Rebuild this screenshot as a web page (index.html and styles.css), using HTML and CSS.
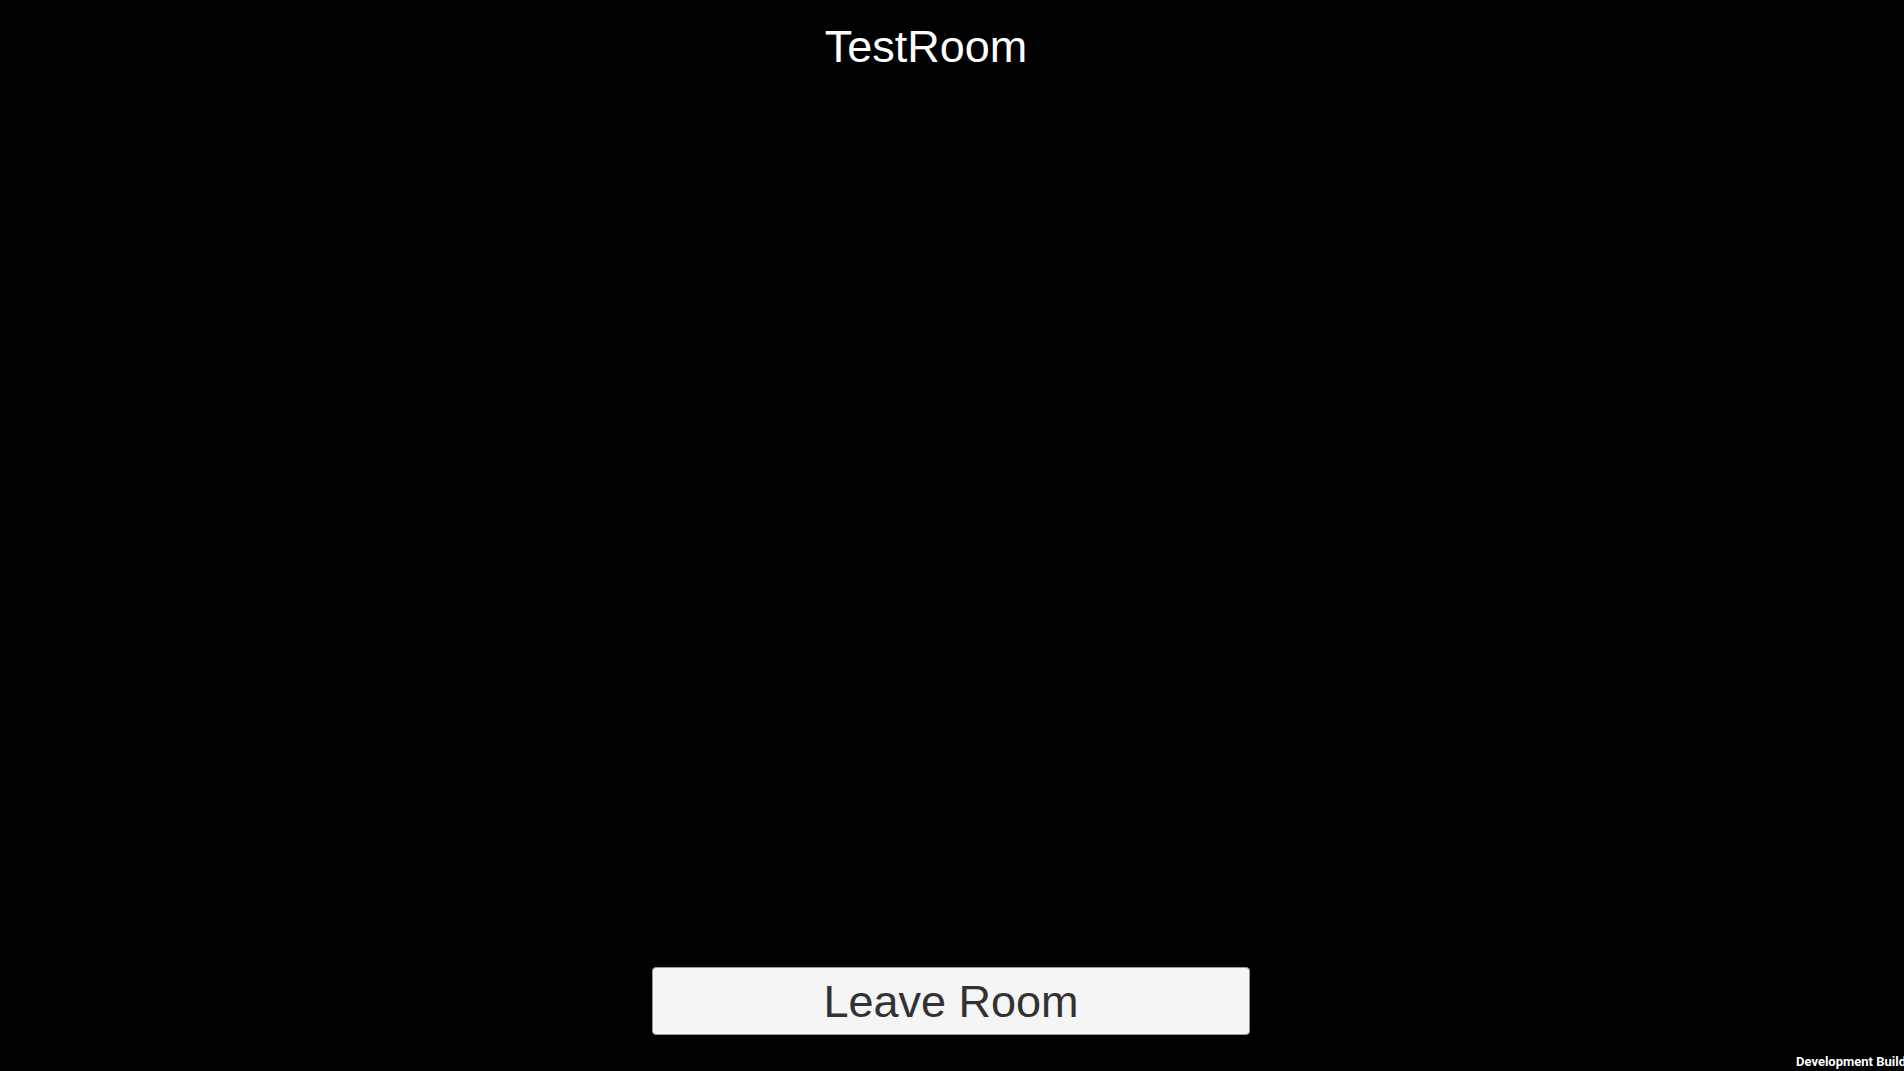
FILE: index.html
```html
<!DOCTYPE html>
<html lang="en">
<head>
<meta charset="utf-8">
<title>TestRoom</title>
<link rel="stylesheet" href="styles.css">
</head>
<body>
<main class="room">
  <h1 class="room-name">TestRoom</h1>
  <button class="leave-button" type="button">Leave Room</button>
</main>
<p class="build-label">Development Build</p>
</body>
</html>
```
FILE: styles.css
```css
* {
  box-sizing: border-box;
}

body {
  margin: 0;
  background: #000;
  color: #fff;
  font-family: "Liberation Sans", Arial, sans-serif;
  overflow: hidden;
}

.room {
  display: flex;
  flex-direction: column;
  justify-content: space-between;
  align-items: center;
  min-height: 100vh;
  padding: 21px 2px 36px 0;
}

.room-name {
  margin: 0;
  padding-right: 50px;
  font-size: 45px;
  font-weight: 400;
  line-height: 52px;
}

.leave-button {
  width: 598px;
  max-width: 100%;
  height: 68px;
  padding: 1px 0 0;
  border: 1px solid #999;
  border-radius: 4px;
  background: #f5f5f5;
  color: #323232;
  font: 45px/65px "Liberation Sans", Arial, sans-serif;
}

/* Watermark overlaid on the bottom corner, running off the right edge */
.build-label {
  position: absolute;
  right: -2px;
  bottom: 1px;
  margin: 0;
  font: 700 13px/16px Roboto, sans-serif;
  white-space: nowrap;
}
```
